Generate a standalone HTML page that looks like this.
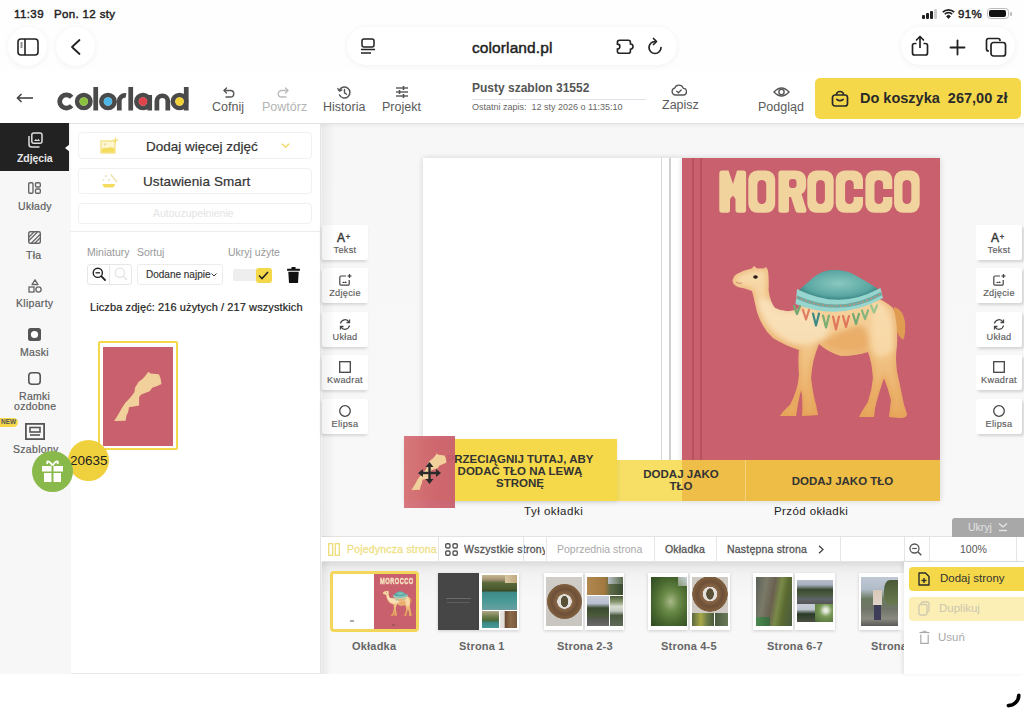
<!DOCTYPE html>
<html><head><meta charset="utf-8">
<style>
*{margin:0;padding:0;box-sizing:border-box}
html,body{width:1024px;height:711px;overflow:hidden;background:#fff;font-family:"Liberation Sans",sans-serif;color:#333}
.a{position:absolute}
.t{position:absolute;white-space:nowrap;line-height:1}
svg{position:absolute;overflow:visible}
</style></head><body>
<!-- browser chrome bg -->
<div class="a" style="left:0;top:0;width:1024px;height:123px;background:#fefefe"></div>
<div class="a" style="left:0;top:70px;width:1024px;height:53px;background:#fff"></div>
<div class="a" style="left:0;top:123px;width:1024px;height:2px;background:#e2e2e2"></div>

<!-- status bar -->
<div class="t" style="left:14px;top:9px;font-size:11.5px;color:#222;letter-spacing:0.4px;-webkit-text-stroke:0.45px #222">11:39</div>
<div class="t" style="left:54px;top:9px;font-size:11.5px;color:#222;letter-spacing:0.35px;-webkit-text-stroke:0.45px #222">Pon. 12 sty</div>
<svg style="left:922px;top:9px" width="16" height="10"><rect x="0" y="6" width="3" height="4" rx="1" fill="#222"/><rect x="4" y="4" width="3" height="6" rx="1" fill="#222"/><rect x="8" y="2" width="3" height="8" rx="1" fill="#222"/><rect x="12" y="0" width="3" height="10" rx="1" fill="#ccc"/></svg>
<svg style="left:942px;top:8px" width="13" height="11" viewBox="0 0 13 11"><path d="M0.8 4.2 A8 8 0 0 1 12.2 4.2" stroke="#222" stroke-width="1.7" fill="none"/><path d="M2.8 6.3 A5 5 0 0 1 10.2 6.3" stroke="#222" stroke-width="1.7" fill="none"/><path d="M4.6 8.3 A2.6 2.6 0 0 1 8.4 8.3 L6.5 10.4Z" fill="#222" stroke="#222" stroke-width="1"/></svg>
<div class="t" style="left:958px;top:9px;font-size:11.5px;color:#222;letter-spacing:0.3px;-webkit-text-stroke:0.45px #222">91%</div>
<div class="a" style="left:987px;top:8px;width:22px;height:11px;border:1px solid #bbb;border-radius:3.5px"></div>
<div class="a" style="left:989px;top:10px;width:17px;height:7px;background:#111;border-radius:2px"></div>
<div class="a" style="left:1010px;top:12px;width:1.5px;height:4px;background:#bbb;border-radius:1px"></div>

<!-- toolbar pills -->
<div class="a" style="left:8px;top:27px;width:39px;height:39px;border-radius:50%;background:#fff;box-shadow:0 1px 6px rgba(0,0,0,.06)"></div>
<svg style="left:17px;top:38px" width="22" height="18" viewBox="0 0 22 18"><rect x="1" y="1" width="20" height="16" rx="3" stroke="#222" stroke-width="1.6" fill="none"/><line x1="8" y1="1" x2="8" y2="17" stroke="#222" stroke-width="1.6"/><line x1="3.5" y1="5" x2="5.5" y2="5" stroke="#222" stroke-width="1"/><line x1="3.5" y1="7" x2="5.5" y2="7" stroke="#222" stroke-width="1"/><line x1="3.5" y1="9" x2="5.5" y2="9" stroke="#222" stroke-width="1"/></svg>
<div class="a" style="left:56px;top:27px;width:39px;height:39px;border-radius:50%;background:#fff;box-shadow:0 1px 6px rgba(0,0,0,.06)"></div>
<svg style="left:70px;top:39px" width="12" height="16" viewBox="0 0 12 16"><path d="M9.5 1 L2 8 L9.5 15" stroke="#222" stroke-width="1.8" fill="none" stroke-linecap="round" stroke-linejoin="round"/></svg>

<div class="a" style="left:347px;top:27px;width:330px;height:38px;border-radius:19px;background:#fff;box-shadow:0 1px 6px rgba(0,0,0,.06)"></div>
<svg style="left:360px;top:38px" width="16" height="17" viewBox="0 0 16 17"><rect x="2" y="1" width="12" height="8" rx="2" stroke="#222" stroke-width="1.5" fill="none"/><line x1="1" y1="11.5" x2="15" y2="11.5" stroke="#222" stroke-width="1.5"/><line x1="1" y1="15" x2="11" y2="15" stroke="#222" stroke-width="1.5"/></svg>
<div class="t" style="left:472px;top:40px;font-size:15.5px;color:#222;-webkit-text-stroke:0.45px #222;letter-spacing:0.1px">colorland.pl</div>
<svg style="left:615px;top:38px" width="21" height="17" viewBox="0 0 21 17"><path d="M4.4 2.3 H13.4 A2 2 0 0 1 15.4 4.3 V6 A2.6 2.6 0 0 1 15.4 11.2 V13.3 A2 2 0 0 1 13.4 15.3 H4.4 A2 2 0 0 1 2.4 13.3 V11.1 A2.5 2.5 0 0 0 2.4 6.1 V4.3 A2 2 0 0 1 4.4 2.3Z" stroke="#222" stroke-width="1.6" fill="none"/></svg>
<svg style="left:647px;top:38px" width="16" height="17" viewBox="0 0 16 17"><path d="M8 3.5 A6 6 0 1 0 14 9.5" stroke="#222" stroke-width="1.7" fill="none" stroke-linecap="round"/><path d="M6.5 0.5 L9.5 3.5 L6.5 6.5" stroke="#222" stroke-width="1.7" fill="none" stroke-linecap="round" stroke-linejoin="round"/></svg>

<div class="a" style="left:901px;top:27px;width:114px;height:38px;border-radius:19px;background:#fff;box-shadow:0 1px 6px rgba(0,0,0,.06)"></div>
<svg style="left:911px;top:35px" width="18" height="21" viewBox="0 0 18 21"><path d="M5.5 8.5 H3.5 A2 2 0 0 0 1.5 10.5 V18 A2 2 0 0 0 3.5 20 H14.5 A2 2 0 0 0 16.5 18 V10.5 A2 2 0 0 0 14.5 8.5 H12.5" stroke="#222" stroke-width="1.7" fill="none"/><line x1="9" y1="1.5" x2="9" y2="13" stroke="#222" stroke-width="1.7"/><path d="M5.5 5 L9 1.5 L12.5 5" stroke="#222" stroke-width="1.7" fill="none" stroke-linecap="round" stroke-linejoin="round"/></svg>
<svg style="left:950px;top:40px" width="15" height="15" viewBox="0 0 15 15"><line x1="7.5" y1="0.5" x2="7.5" y2="14.5" stroke="#222" stroke-width="1.8" stroke-linecap="round"/><line x1="0.5" y1="7.5" x2="14.5" y2="7.5" stroke="#222" stroke-width="1.8" stroke-linecap="round"/></svg>
<svg style="left:985px;top:37px" width="22" height="20" viewBox="0 0 22 20"><path d="M4 14 H3.5 A2 2 0 0 1 1.5 12 V3.5 A2 2 0 0 1 3.5 1.5 H13 A2 2 0 0 1 15 3.5 V4" stroke="#222" stroke-width="1.7" fill="none"/><rect x="6" y="5.5" width="14.5" height="13.5" rx="2.5" stroke="#222" stroke-width="1.7" fill="none"/></svg>

<!-- app header -->
<svg style="left:16px;top:93px" width="18" height="10" viewBox="0 0 18 10"><line x1="1.5" y1="5" x2="17" y2="5" stroke="#444" stroke-width="1.6"/><path d="M5.5 1 L1.5 5 L5.5 9" stroke="#444" stroke-width="1.6" fill="none"/></svg>
<!-- logo -->
<svg style="left:57px;top:86px" width="138" height="26" viewBox="0 0 134 26" preserveAspectRatio="none">
<g fill="none" stroke="#4a4a4a" stroke-width="4.6">
<path d="M14.2 11.2 A6.6 6.6 0 1 0 14.2 19.8"/>
<circle cx="26" cy="15.5" r="6.4"/>
<line x1="37.6" y1="1" x2="37.6" y2="24.5"/>
<circle cx="49.5" cy="15.5" r="6.4"/>
<path d="M60.5 24.5 V15 A5.5 5.5 0 0 1 67 9.5"/>
<line x1="71.6" y1="1" x2="71.6" y2="24.5"/>
<circle cx="83.5" cy="15.5" r="6.4"/>
<line x1="90" y1="9" x2="90" y2="24.5"/>
<path d="M97 24.5 V15 A5.3 5.3 0 0 1 107.6 15 V24.5"/>
<circle cx="119" cy="15.5" r="6.4"/>
<line x1="125.5" y1="1" x2="125.5" y2="24.5"/>
</g>
<circle cx="26" cy="15.5" r="4.2" fill="#8cc041"/>
<circle cx="49.5" cy="15.5" r="4.2" fill="#4cb6e4"/>
<circle cx="83.5" cy="15.5" r="4.2" fill="#e0434b"/>
<circle cx="119" cy="15.5" r="4.2" fill="#f3d238"/>
</svg>

<svg style="left:223px;top:87px" width="12" height="11" viewBox="0 0 12 11"><path d="M3.5 1 L1 3.5 L3.5 6" stroke="#555" stroke-width="1.4" fill="none" stroke-linejoin="round" stroke-linecap="round"/><path d="M1.3 3.5 H7.5 A3.2 3.2 0 0 1 7.5 10 H3" stroke="#555" stroke-width="1.4" fill="none" stroke-linecap="round"/></svg>
<div class="t" style="left:212px;top:101px;font-size:12.5px;color:#5a5a5a">Cofnij</div>
<svg style="left:277px;top:87px" width="12" height="11" viewBox="0 0 12 11"><path d="M8.5 1 L11 3.5 L8.5 6" stroke="#bbb" stroke-width="1.4" fill="none" stroke-linejoin="round" stroke-linecap="round"/><path d="M10.7 3.5 H4.5 A3.2 3.2 0 0 0 4.5 10 H9" stroke="#bbb" stroke-width="1.4" fill="none" stroke-linecap="round"/></svg>
<div class="t" style="left:262px;top:101px;font-size:12.5px;color:#b4b4b4">Powtórz</div>
<svg style="left:337px;top:86px" width="14" height="13" viewBox="0 0 14 13"><path d="M2.3 4.5 A5.5 5.5 0 1 1 2.5 9" stroke="#555" stroke-width="1.5" fill="none" stroke-linecap="round"/><path d="M0.8 2.5 L2.3 5 L4.8 4" stroke="#555" stroke-width="1.4" fill="none" stroke-linecap="round" stroke-linejoin="round"/><path d="M7.5 3.5 V6.8 L9.5 8.3" stroke="#555" stroke-width="1.4" fill="none" stroke-linecap="round"/></svg>
<div class="t" style="left:323px;top:101px;font-size:12.5px;color:#5a5a5a">Historia</div>
<svg style="left:395px;top:86px" width="14" height="12" viewBox="0 0 14 12"><g stroke="#555" stroke-width="1.4"><line x1="1" y1="2" x2="13" y2="2"/><line x1="1" y1="6" x2="13" y2="6"/><line x1="1" y1="10" x2="13" y2="10"/></g><g stroke="#555" stroke-width="1.6"><line x1="8.5" y1="0" x2="8.5" y2="4"/><line x1="4.5" y1="4" x2="4.5" y2="8"/><line x1="8.5" y1="8" x2="8.5" y2="12"/></g></svg>
<div class="t" style="left:382px;top:101px;font-size:12.5px;color:#5a5a5a">Projekt</div>

<div class="t" style="left:472px;top:82px;font-size:12px;font-weight:bold;color:#555">Pusty szablon 31552</div>
<div class="a" style="left:472px;top:99px;width:174px;height:1px;background:#dde3e8"></div>
<div class="t" style="left:472px;top:103px;font-size:9px;color:#666">Ostatni zapis:&nbsp; 12 sty 2026 o 11:35:10</div>

<svg style="left:671px;top:84px" width="16" height="12" viewBox="0 0 16 12"><path d="M4 11 A3.5 3.5 0 0 1 3.6 4.2 A4.6 4.6 0 0 1 12.3 4.4 A3.3 3.3 0 0 1 12 11 Z" stroke="#555" stroke-width="1.3" fill="none" stroke-linejoin="round"/><path d="M5.8 7.3 L7.4 8.8 L10.2 6" stroke="#555" stroke-width="1.3" fill="none" stroke-linecap="round"/></svg>
<div class="t" style="left:662px;top:99px;font-size:12.5px;color:#5a5a5a">Zapisz</div>

<svg style="left:773px;top:86px" width="17" height="12" viewBox="0 0 17 12"><path d="M1 6 Q8.5 -2 16 6 Q8.5 14 1 6Z" stroke="#555" stroke-width="1.4" fill="none"/><circle cx="8.5" cy="6" r="2.6" stroke="#555" stroke-width="1.4" fill="none"/></svg>
<div class="t" style="left:758px;top:101px;font-size:12.5px;color:#5a5a5a">Podgląd</div>

<div class="a" style="left:815px;top:78px;width:206px;height:41px;border-radius:5px;background:#f5d84a"></div>
<svg style="left:831px;top:91px" width="18" height="16" viewBox="0 0 18 16"><rect x="1.5" y="4" width="15" height="11" rx="2.5" stroke="#2a2a2a" stroke-width="1.7" fill="none"/><path d="M5.5 4 V3.5 A3.5 3 0 0 1 12.5 3.5 V4" stroke="#2a2a2a" stroke-width="1.7" fill="none"/><path d="M5.8 8.3 Q9 11 12.2 8.3" stroke="#2a2a2a" stroke-width="1.6" fill="none" stroke-linecap="round"/></svg>
<div class="t" style="left:860px;top:91px;font-size:14.5px;font-weight:bold;color:#2a2a2a">Do koszyka&nbsp; 267,00 zł</div>

<!-- left sidebar -->
<div class="a" style="left:0;top:124px;width:71px;height:550px;background:#f7f7f7"></div>
<div class="a" style="left:0;top:123px;width:69px;height:48px;background:#222"></div>

<!-- sidebar items -->
<div class="a" style="left:65px;top:144px;width:0;height:0;border-top:4.5px solid transparent;border-bottom:4.5px solid transparent;border-right:5px solid #fff"></div>
<svg style="left:27px;top:132px" width="16" height="16" viewBox="0 0 16 16"><path d="M2 4 V12.5 A2.5 2.5 0 0 0 4.5 15 H12.5" stroke="#ddd" stroke-width="1.5" fill="none"/><rect x="4.8" y="1" width="10.2" height="10.2" rx="2" stroke="#ddd" stroke-width="1.5" fill="none"/><path d="M7 9 L8.8 7 L10.2 8.2 L11.5 6.8 L13 9Z" fill="#ddd"/></svg>
<div class="t" style="left:17px;top:153px;font-size:10.5px;font-weight:bold;color:#e6e6e6;letter-spacing:-0.1px">Zdjęcia</div>

<svg style="left:28px;top:182px" width="13" height="12" viewBox="0 0 13 12"><rect x="0.7" y="0.7" width="4.3" height="10.6" rx="1.2" stroke="#666" stroke-width="1.4" fill="none"/><rect x="7.5" y="0.7" width="4.8" height="4.3" rx="1.2" stroke="#666" stroke-width="1.4" fill="none"/><rect x="7.5" y="7" width="4.8" height="4.3" rx="1.2" stroke="#666" stroke-width="1.4" fill="none"/></svg>
<div class="t" style="left:18px;top:201px;font-size:10.5px;color:#5e5e5e;letter-spacing:0.3px;-webkit-text-stroke:0.2px #5e5e5e">Układy</div>

<svg style="left:28px;top:231px" width="13" height="13" viewBox="0 0 13 13"><rect x="0.7" y="0.7" width="11.6" height="11.6" rx="1.5" stroke="#666" stroke-width="1.4" fill="none"/><g stroke="#666" stroke-width="1.3"><line x1="1" y1="6" x2="6" y2="1"/><line x1="1" y1="9.5" x2="9.5" y2="1"/><line x1="3.5" y1="12" x2="12" y2="3.5"/><line x1="7" y1="12" x2="12" y2="7"/></g></svg>
<div class="t" style="left:26px;top:250px;font-size:10.5px;color:#5e5e5e;letter-spacing:0.3px;-webkit-text-stroke:0.2px #5e5e5e">Tła</div>

<svg style="left:28px;top:279px" width="14" height="14" viewBox="0 0 14 14"><path d="M7 0.8 L10 5.5 H4Z" stroke="#666" stroke-width="1.3" fill="none" stroke-linejoin="round"/><rect x="1" y="8" width="5" height="5" stroke="#666" stroke-width="1.3" fill="none"/><circle cx="10.5" cy="10.5" r="2.6" stroke="#666" stroke-width="1.3" fill="none"/></svg>
<div class="t" style="left:16px;top:298px;font-size:10.5px;color:#5e5e5e;letter-spacing:0.3px;-webkit-text-stroke:0.2px #5e5e5e">Kliparty</div>

<svg style="left:28px;top:328px" width="13" height="13" viewBox="0 0 13 13"><rect x="0" y="0" width="13" height="13" rx="2.5" fill="#555"/><circle cx="6.5" cy="6.5" r="3.6" fill="#fff"/></svg>
<div class="t" style="left:20px;top:347px;font-size:10.5px;color:#5e5e5e;letter-spacing:0.3px;-webkit-text-stroke:0.2px #5e5e5e">Maski</div>

<svg style="left:28px;top:372px" width="13" height="13" viewBox="0 0 13 13"><rect x="0.8" y="0.8" width="11.4" height="11.4" rx="3" stroke="#555" stroke-width="1.6" fill="none"/></svg>
<div class="t" style="left:19px;top:391px;font-size:10.5px;color:#5e5e5e;letter-spacing:0.3px;-webkit-text-stroke:0.2px #5e5e5e">Ramki</div>
<div class="t" style="left:14px;top:401px;font-size:10.5px;color:#5e5e5e;letter-spacing:0.3px;-webkit-text-stroke:0.2px #5e5e5e">ozdobne</div>

<div class="a" style="left:-6px;top:418px;width:24px;height:9px;border-radius:5px;background:#f5d84a"></div>
<div class="t" style="left:1px;top:419px;font-size:6.5px;font-weight:bold;color:#555">NEW</div>
<svg style="left:25px;top:423px" width="20" height="17" viewBox="0 0 20 17"><rect x="0.9" y="0.9" width="18.2" height="15.2" stroke="#555" stroke-width="1.8" fill="none"/><rect x="5" y="4.5" width="10" height="4.5" stroke="#555" stroke-width="1.6" fill="none"/><line x1="5" y1="12" x2="15" y2="12" stroke="#555" stroke-width="1.6"/></svg>
<div class="t" style="left:13px;top:444px;font-size:10.5px;color:#5e5e5e;letter-spacing:0.3px;-webkit-text-stroke:0.2px #5e5e5e">Szablony</div>

<!-- left panel -->
<div class="a" style="left:71px;top:124px;width:250px;height:550px;background:#fff"></div>
<div class="a" style="left:320px;top:124px;width:1px;height:550px;background:#e4e4e4"></div>

<!-- panel content -->
<div class="a" style="left:78px;top:132px;width:234px;height:27px;border:1px solid #f1f1f1;border-radius:4px;background:#fff"></div>
<svg style="left:100px;top:137px" width="19" height="17" viewBox="0 0 19 17"><rect x="1" y="4" width="14" height="12" fill="#fdf6d0" stroke="#f3df78" stroke-width="1.2"/><path d="M1.5 15.5 V12 Q5 10 8 11 Q11 9.5 14.5 11.5 V15.5Z" fill="#f3dc5e"/><circle cx="5" cy="7.3" r="1.1" fill="#e8d9a0"/><line x1="15.5" y1="0.5" x2="15.5" y2="6" stroke="#f3df78" stroke-width="1.3"/><line x1="12.8" y1="3.2" x2="18.3" y2="3.2" stroke="#f3df78" stroke-width="1.3"/></svg>
<div class="t" style="left:146px;top:140px;font-size:13.5px;color:#333;letter-spacing:0px;-webkit-text-stroke:0.2px #333">Dodaj więcej zdjęć</div>
<svg style="left:281px;top:143px" width="9" height="5" viewBox="0 0 9 5"><path d="M0.8 0.8 L4.5 4.2 L8.2 0.8" stroke="#f0d65a" stroke-width="1.3" fill="none"/></svg>

<div class="a" style="left:78px;top:168px;width:234px;height:26px;border:1px solid #f1f1f1;border-radius:4px;background:#fff"></div>
<svg style="left:100px;top:172px" width="19" height="17" viewBox="0 0 19 17"><path d="M2.5 12 H15 Q14.5 15.5 12 15.5 H5.5 Q3 15.5 2.5 12Z" fill="#f3dc5e"/><circle cx="6" cy="4" r="1" fill="#e4dcb0"/><circle cx="3.5" cy="8" r="0.8" fill="#e4dcb0"/><circle cx="9" cy="8" r="0.9" fill="#e4dcb0"/><line x1="11" y1="3" x2="17" y2="10" stroke="#eee0a0" stroke-width="1.2"/><path d="M11 2 L12 3.5" stroke="#f0e39a" stroke-width="1"/></svg>
<div class="t" style="left:143px;top:175px;font-size:13.5px;color:#333;letter-spacing:0.1px;-webkit-text-stroke:0.2px #333">Ustawienia Smart</div>

<div class="a" style="left:78px;top:203px;width:234px;height:21px;border:1px solid #f0f0f0;border-radius:4px;background:#fff"></div>
<div class="t" style="left:153px;top:208px;font-size:10.5px;color:#e4e4e4">Autouzupełnienie</div>
<div class="a" style="left:70px;top:231px;width:251px;height:1px;background:#ececec"></div>

<div class="t" style="left:87px;top:247px;font-size:10.5px;color:#999">Miniatury</div>
<div class="t" style="left:137px;top:247px;font-size:10.5px;color:#999">Sortuj</div>
<div class="t" style="left:228px;top:247px;font-size:10.5px;color:#999">Ukryj użyte</div>

<div class="a" style="left:87px;top:264px;width:45px;height:21px;border:1px solid #e6e6e6;border-radius:3px;background:#fff"></div>
<div class="a" style="left:109px;top:264px;width:1px;height:21px;background:#e6e6e6"></div>
<svg style="left:92px;top:267px" width="14" height="14" viewBox="0 0 14 14"><circle cx="5.8" cy="5.8" r="4.6" stroke="#222" stroke-width="1.4" fill="none"/><line x1="3.5" y1="5.8" x2="8.1" y2="5.8" stroke="#222" stroke-width="1.3"/><line x1="9.2" y1="9.2" x2="13" y2="13" stroke="#222" stroke-width="1.8" stroke-linecap="round"/></svg>
<svg style="left:114px;top:267px" width="14" height="14" viewBox="0 0 14 14"><circle cx="5.8" cy="5.8" r="4.6" stroke="#e4e4e4" stroke-width="1.3" fill="none"/><line x1="9.2" y1="9.2" x2="13" y2="13" stroke="#e4e4e4" stroke-width="1.6"/></svg>

<div class="a" style="left:137px;top:264px;width:86px;height:21px;border:1px solid #ececec;border-radius:3px;background:#fff"></div>
<div class="t" style="left:146px;top:270px;font-size:10px;color:#333;-webkit-text-stroke:0.15px #333">Dodane najpie</div>
<svg style="left:211px;top:273px" width="6" height="4" viewBox="0 0 6 4"><path d="M0.5 0.5 L3 3 L5.5 0.5" stroke="#333" stroke-width="1" fill="none"/></svg>

<div class="a" style="left:233px;top:269px;width:26px;height:12px;border-radius:2px;background:#eeeeef"></div>
<div class="a" style="left:256px;top:268px;width:16px;height:15px;border-radius:3px;background:#f5d84a"></div>
<svg style="left:258px;top:271px" width="11" height="9" viewBox="0 0 11 9"><path d="M1 4.5 L4 7.5 L10 1" stroke="#222" stroke-width="1.6" fill="none"/></svg>
<svg style="left:287px;top:267px" width="13" height="16" viewBox="0 0 13 16"><rect x="0" y="1.8" width="13" height="2" rx="0.5" fill="#111"/><rect x="4.5" y="0" width="4" height="2" fill="#111"/><path d="M1.3 4.8 H11.7 L11 16 H2Z" fill="#111"/></svg>

<div class="t" style="left:90px;top:302px;font-size:11px;color:#222;letter-spacing:0.1px;-webkit-text-stroke:0.2px #222">Liczba zdjęć: 216 użytych / 217 wszystkich</div>

<!-- selected photo thumb -->
<div class="a" style="left:98px;top:341px;width:80px;height:109px;border:2.5px solid #f5d84a;border-radius:2px;background:#fff"></div>
<div class="a" style="left:103px;top:347px;width:70px;height:99px;background:#c9606e"></div>
<svg style="left:103px;top:347px" width="70" height="99" viewBox="0 0 70 99"><path d="M45.4 24.75 L47.5 26.4 L55.9 27.3 L57.6 31.5 L58.5 37 L54.3 39.1 L49.2 40.8 L46.7 44.2 L38.2 47.5 L36.1 50.1 L36.1 58.5 L30.6 59.4 L26 60.2 L25.1 65.3 L23.5 68.6 L22.6 73.7 L11.2 74.1 L13.5 70.3 L16.5 65.3 L19.5 60 L22.5 55.5 L26 52 L29 48.5 L31.5 45 L32 40.8 L35.5 35 L40 31.5 L43 28Z" fill="#f1d09b"/></svg>

<!-- gift badges -->
<div class="a" style="left:68px;top:440px;width:41px;height:41px;border-radius:50%;background:#efd03d"></div>
<div class="t" style="left:70px;top:454px;font-size:13.5px;color:#222">20635</div>
<div class="a" style="left:32px;top:451px;width:41px;height:41px;border-radius:50%;background:#8ab94b"></div>
<svg style="left:41px;top:457px" width="23" height="27" viewBox="0 0 23 27"><g fill="#fff"><rect x="1" y="9" width="9.5" height="5.5"/><rect x="12.5" y="9" width="9.5" height="5.5"/><rect x="3" y="16" width="7.5" height="9"/><rect x="12.5" y="16" width="7.5" height="9"/></g><path d="M11.5 8.5 C8 3 5 3.5 6.5 7 M11.5 8.5 C15 3 18 3.5 16.5 7" stroke="#fff" stroke-width="1.8" fill="none"/></svg>

<div class="a" style="left:71px;top:673px;width:250px;height:1px;background:#e6e6e6"></div>
<!-- canvas -->
<div class="a" style="left:322px;top:124px;width:702px;height:413px;background:linear-gradient(#ececec,#f7f7f7 4px,#f8f8f8)"></div>

<!-- tools -->
<div class="a" style="left:322px;top:224.5px;width:46px;height:35px;border-radius:2px;background:#fff;box-shadow:-1px 2px 3px rgba(0,0,0,.13)"></div>
<div class="t" style="left:337px;top:232.0px;font-size:12px;color:#333;-webkit-text-stroke:0.4px #333">A</div><div class="t" style="left:345.5px;top:233.0px;font-size:8.5px;font-weight:bold;color:#444">+</div>
<div class="t" style="left:315px;width:60px;text-align:center;top:245.5px;font-size:9.2px;color:#5c5c5c;letter-spacing:0.3px;-webkit-text-stroke:0.15px #5c5c5c">Tekst</div>
<div class="a" style="left:322px;top:268.0px;width:46px;height:35px;border-radius:2px;background:#fff;box-shadow:-1px 2px 3px rgba(0,0,0,.13)"></div>
<svg style="left:339px;top:274.0px" width="13" height="12" viewBox="0 0 13 12"><path d="M7 2 H2 A1.2 1.2 0 0 0 0.8 3.2 V10 A1.2 1.2 0 0 0 2 11.2 H9 A1.2 1.2 0 0 0 10.2 10 V6" stroke="#444" stroke-width="1.2" fill="none"/><path d="M3 9 L4.5 7.5 L5.5 8.5 L6.5 7.3 L8 9Z" fill="#444"/><line x1="10.5" y1="0" x2="10.5" y2="4" stroke="#444" stroke-width="1.2"/><line x1="8.5" y1="2" x2="12.5" y2="2" stroke="#444" stroke-width="1.2"/></svg>
<div class="t" style="left:315px;width:60px;text-align:center;top:289.0px;font-size:9.2px;color:#5c5c5c;letter-spacing:0.3px;-webkit-text-stroke:0.15px #5c5c5c">Zdjęcie</div>
<div class="a" style="left:322px;top:311.5px;width:46px;height:35px;border-radius:2px;background:#fff;box-shadow:-1px 2px 3px rgba(0,0,0,.13)"></div>
<svg style="left:339px;top:318.5px" width="12" height="11" viewBox="0 0 12 11"><path d="M1.5 4.5 A4.6 4.6 0 0 1 10 3" stroke="#444" stroke-width="1.3" fill="none"/><path d="M10.5 6.5 A4.6 4.6 0 0 1 2 8" stroke="#444" stroke-width="1.3" fill="none"/><path d="M10.5 0.5 V3.5 H7.5" stroke="#444" stroke-width="1.3" fill="none"/><path d="M1.5 10.5 V7.5 H4.5" stroke="#444" stroke-width="1.3" fill="none"/></svg>
<div class="t" style="left:315px;width:60px;text-align:center;top:332.5px;font-size:9.2px;color:#5c5c5c;letter-spacing:0.3px;-webkit-text-stroke:0.15px #5c5c5c">Układ</div>
<div class="a" style="left:322px;top:355.0px;width:46px;height:35px;border-radius:2px;background:#fff;box-shadow:-1px 2px 3px rgba(0,0,0,.13)"></div>
<svg style="left:339px;top:361.0px" width="12" height="12" viewBox="0 0 12 12"><rect x="0.7" y="0.7" width="10.6" height="10.6" stroke="#444" stroke-width="1.3" fill="none"/></svg>
<div class="t" style="left:315px;width:60px;text-align:center;top:376.0px;font-size:9.2px;color:#5c5c5c;letter-spacing:0.3px;-webkit-text-stroke:0.15px #5c5c5c">Kwadrat</div>
<div class="a" style="left:322px;top:398.5px;width:46px;height:35px;border-radius:2px;background:#fff;box-shadow:-1px 2px 3px rgba(0,0,0,.13)"></div>
<svg style="left:339px;top:404.5px" width="12" height="12" viewBox="0 0 12 12"><circle cx="6" cy="6" r="5.3" stroke="#444" stroke-width="1.3" fill="none"/></svg>
<div class="t" style="left:315px;width:60px;text-align:center;top:419.5px;font-size:9.2px;color:#5c5c5c;letter-spacing:0.3px;-webkit-text-stroke:0.15px #5c5c5c">Elipsa</div>
<div class="a" style="left:976px;top:224.5px;width:46px;height:35px;border-radius:2px;background:#fff;box-shadow:2px 2px 3px rgba(0,0,0,.15)"></div>
<div class="t" style="left:991px;top:232.0px;font-size:12px;color:#333;-webkit-text-stroke:0.4px #333">A</div><div class="t" style="left:999.5px;top:233.0px;font-size:8.5px;font-weight:bold;color:#444">+</div>
<div class="t" style="left:969px;width:60px;text-align:center;top:245.5px;font-size:9.2px;color:#5c5c5c;letter-spacing:0.3px;-webkit-text-stroke:0.15px #5c5c5c">Tekst</div>
<div class="a" style="left:976px;top:268.0px;width:46px;height:35px;border-radius:2px;background:#fff;box-shadow:2px 2px 3px rgba(0,0,0,.15)"></div>
<svg style="left:993px;top:274.0px" width="13" height="12" viewBox="0 0 13 12"><path d="M7 2 H2 A1.2 1.2 0 0 0 0.8 3.2 V10 A1.2 1.2 0 0 0 2 11.2 H9 A1.2 1.2 0 0 0 10.2 10 V6" stroke="#444" stroke-width="1.2" fill="none"/><path d="M3 9 L4.5 7.5 L5.5 8.5 L6.5 7.3 L8 9Z" fill="#444"/><line x1="10.5" y1="0" x2="10.5" y2="4" stroke="#444" stroke-width="1.2"/><line x1="8.5" y1="2" x2="12.5" y2="2" stroke="#444" stroke-width="1.2"/></svg>
<div class="t" style="left:969px;width:60px;text-align:center;top:289.0px;font-size:9.2px;color:#5c5c5c;letter-spacing:0.3px;-webkit-text-stroke:0.15px #5c5c5c">Zdjęcie</div>
<div class="a" style="left:976px;top:311.5px;width:46px;height:35px;border-radius:2px;background:#fff;box-shadow:2px 2px 3px rgba(0,0,0,.15)"></div>
<svg style="left:993px;top:318.5px" width="12" height="11" viewBox="0 0 12 11"><path d="M1.5 4.5 A4.6 4.6 0 0 1 10 3" stroke="#444" stroke-width="1.3" fill="none"/><path d="M10.5 6.5 A4.6 4.6 0 0 1 2 8" stroke="#444" stroke-width="1.3" fill="none"/><path d="M10.5 0.5 V3.5 H7.5" stroke="#444" stroke-width="1.3" fill="none"/><path d="M1.5 10.5 V7.5 H4.5" stroke="#444" stroke-width="1.3" fill="none"/></svg>
<div class="t" style="left:969px;width:60px;text-align:center;top:332.5px;font-size:9.2px;color:#5c5c5c;letter-spacing:0.3px;-webkit-text-stroke:0.15px #5c5c5c">Układ</div>
<div class="a" style="left:976px;top:355.0px;width:46px;height:35px;border-radius:2px;background:#fff;box-shadow:2px 2px 3px rgba(0,0,0,.15)"></div>
<svg style="left:993px;top:361.0px" width="12" height="12" viewBox="0 0 12 12"><rect x="0.7" y="0.7" width="10.6" height="10.6" stroke="#444" stroke-width="1.3" fill="none"/></svg>
<div class="t" style="left:969px;width:60px;text-align:center;top:376.0px;font-size:9.2px;color:#5c5c5c;letter-spacing:0.3px;-webkit-text-stroke:0.15px #5c5c5c">Kwadrat</div>
<div class="a" style="left:976px;top:398.5px;width:46px;height:35px;border-radius:2px;background:#fff;box-shadow:2px 2px 3px rgba(0,0,0,.15)"></div>
<svg style="left:993px;top:404.5px" width="12" height="12" viewBox="0 0 12 12"><circle cx="6" cy="6" r="5.3" stroke="#444" stroke-width="1.3" fill="none"/></svg>
<div class="t" style="left:969px;width:60px;text-align:center;top:419.5px;font-size:9.2px;color:#5c5c5c;letter-spacing:0.3px;-webkit-text-stroke:0.15px #5c5c5c">Elipsa</div>

<!-- bottom bar -->
<div class="a" style="left:322px;top:536px;width:702px;height:26px;background:#fff;border-top:1px solid #e3e3e3;border-bottom:1px solid #e3e3e3"></div>

<!-- bar contents -->
<div class="a" style="left:952px;top:518px;width:72px;height:19px;border-radius:3px 0 0 0;background:#a8a8a8"></div>
<div class="t" style="left:968px;top:522px;font-size:10.5px;color:#e2e2e2">Ukryj</div>
<svg style="left:998px;top:522px" width="10" height="10" viewBox="0 0 10 10"><path d="M1 1.5 L5 5 L9 1.5" stroke="#e8e8e8" stroke-width="1.3" fill="none"/><line x1="1" y1="8.5" x2="9" y2="8.5" stroke="#e8e8e8" stroke-width="1.3"/></svg>

<svg style="left:328px;top:543px" width="12" height="13" viewBox="0 0 12 13"><rect x="0.7" y="0.7" width="4" height="11.6" stroke="#efdc78" stroke-width="1.3" fill="none"/><rect x="7.3" y="0.7" width="4" height="11.6" stroke="#efdc78" stroke-width="1.3" fill="none"/></svg>
<div class="t" style="left:347px;top:544px;font-size:10.5px;color:#efdf86;-webkit-text-stroke:0.3px #efdf86;letter-spacing:0.2px">Pojedyncza strona</div>
<div class="a" style="left:438px;top:537px;width:1px;height:25px;background:#e6e6e6"></div>
<svg style="left:445px;top:543px" width="13" height="13" viewBox="0 0 13 13"><g stroke="#555" stroke-width="1.4" fill="none"><rect x="0.7" y="0.7" width="4.3" height="4.3" rx="1.3"/><rect x="8" y="0.7" width="4.3" height="4.3" rx="1.3"/><rect x="0.7" y="8" width="4.3" height="4.3" rx="1.3"/><rect x="8" y="8" width="4.3" height="4.3" rx="1.3"/></g></svg>
<div class="t" style="left:464px;top:544px;font-size:10.5px;color:#555;-webkit-text-stroke:0.3px #555;letter-spacing:0.3px;width:81px;overflow:hidden">Wszystkie strony</div>
<div class="a" style="left:523px;top:537px;width:1px;height:25px;background:#e6e6e6"></div>
<div class="a" style="left:546px;top:537px;width:1px;height:25px;background:#e6e6e6"></div>
<div class="t" style="left:557px;top:544px;font-size:10.5px;color:#a8a8a8">Poprzednia strona</div>
<div class="a" style="left:654px;top:537px;width:1px;height:25px;background:#e6e6e6"></div>
<div class="t" style="left:665px;top:544px;font-size:10.5px;color:#555;-webkit-text-stroke:0.3px #555;letter-spacing:0.2px">Okładka</div>
<div class="a" style="left:716px;top:537px;width:1px;height:25px;background:#e6e6e6"></div>
<div class="t" style="left:727px;top:544px;font-size:10.5px;color:#555;-webkit-text-stroke:0.3px #555;letter-spacing:0.2px">Następna strona</div>
<svg style="left:818px;top:545px" width="6" height="9" viewBox="0 0 6 9"><path d="M1 0.8 L5 4.5 L1 8.2" stroke="#444" stroke-width="1.3" fill="none"/></svg>
<div class="a" style="left:840px;top:537px;width:1px;height:25px;background:#e6e6e6"></div>
<div class="a" style="left:904px;top:537px;width:1px;height:25px;background:#e6e6e6"></div>
<svg style="left:909px;top:543px" width="13" height="13" viewBox="0 0 13 13"><circle cx="5.5" cy="5.5" r="4.5" stroke="#555" stroke-width="1.3" fill="none"/><line x1="3.2" y1="5.5" x2="7.8" y2="5.5" stroke="#555" stroke-width="1.2"/><line x1="8.8" y1="8.8" x2="12.3" y2="12.3" stroke="#555" stroke-width="1.5"/></svg>
<div class="a" style="left:929px;top:537px;width:1px;height:25px;background:#e6e6e6"></div>
<div class="t" style="left:960px;top:544px;font-size:10.5px;color:#555">100%</div>
<div class="a" style="left:1016px;top:537px;width:1px;height:25px;background:#e6e6e6"></div>

<!-- thumbs strip -->
<div class="a" style="left:322px;top:562px;width:702px;height:112px;background:linear-gradient(#dcdcdc,#ececec 6px,#f3f3f3 14px,#f8f8f8 40px)"></div>

<!-- thumbnails -->
<div class="a" style="left:330px;top:571px;width:89px;height:61px;border:3px solid #f3d65a;border-radius:4px;background:#fff"></div>
<div class="a" style="left:374px;top:574px;width:42px;height:55px;background:#c9606e"></div>
<div class="t" style="left:380px;top:575.5px;font-size:9.5px;font-weight:bold;color:#f6e2c0;transform:scaleX(0.6);transform-origin:0 0;-webkit-text-stroke:0.5px #f6e2c0;letter-spacing:0.8px">MOROCCO</div>
<svg style="left:382px;top:590px" width="30" height="27" viewBox="728 262 180 162"><use href="#camelg"/></svg>
<div class="a" style="left:350px;top:620px;width:4px;height:2px;background:#aaa"></div>
<div class="a" style="left:392px;top:624px;width:3px;height:2px;background:#a55"></div>
<div class="t" style="left:352px;top:641px;font-size:11px;font-weight:bold;color:#666;letter-spacing:0.2px">Okładka</div>

<div class="a" style="left:438px;top:573px;width:41px;height:57px;background:#464646;box-shadow:0 1px 3px rgba(0,0,0,.18)"></div>
<div class="a" style="left:446px;top:598px;width:25px;height:1px;background:#6a6a6a;"></div>
<div class="a" style="left:447px;top:602px;width:23px;height:1px;background:#5e5e5e;"></div>
<div class="a" style="left:479px;top:573px;width:40px;height:57px;background:#fff;box-shadow:0 1px 3px rgba(0,0,0,.18)"></div>
<div class="a" style="left:482px;top:575px;width:35px;height:35px;background:linear-gradient(180deg,#c8b890 0%,#a09070 14%,#5a6a3a 22%,#4a5a30 40%,#3a4a28 45%,#3e8a88 50%,#4a9a98 75%,#6aa0a0 100%);"></div>
<div class="a" style="left:505px;top:575px;width:12px;height:8px;background:linear-gradient(90deg,#d8c8a0,#c0a880);"></div>
<div class="a" style="left:482px;top:611px;width:17px;height:17px;background:linear-gradient(180deg,#b0a888,#6a7a48 35%,#4a6a3a 55%,#3a8a88 70%,#4a9a98);"></div>
<div class="a" style="left:500px;top:611px;width:17px;height:17px;background:linear-gradient(90deg,#e8e4e0 0%,#e0dcd8 25%,#6a4a30 30%,#8a6a48 60%,#7a5a40);"></div>
<div class="t" style="left:459px;top:641px;font-size:11px;font-weight:bold;color:#666;letter-spacing:0.2px">Strona 1</div>
<div class="a" style="left:544px;top:573px;width:39px;height:57px;background:#fff;box-shadow:0 1px 3px rgba(0,0,0,.18)"></div>
<div class="a" style="left:546px;top:577px;width:36px;height:49px;background:linear-gradient(180deg,#d0ccc8,#c8c4c0);"></div>
<div class="a" style="left:547px;top:584px;width:35px;height:35px;border-radius:50%;background:radial-gradient(ellipse 4px 6px,#5a5038 0,#5a5038 3.5px,transparent 4px),radial-gradient(circle,#e4e0dc 0,#e4e0dc 7px,#8a6848 7.5px,#6e5038 12.5px,#80603f 17.5px,transparent 18px)"></div>
<div class="a" style="left:585px;top:573px;width:39px;height:57px;background:#fff;box-shadow:0 1px 3px rgba(0,0,0,.18)"></div>
<div class="a" style="left:587px;top:577px;width:36px;height:18px;background:linear-gradient(90deg,#b08850 0%,#a07840 50%,#5a6a48 65%,#3a4a30 100%);"></div>
<div class="a" style="left:608px;top:577px;width:15px;height:7px;background:linear-gradient(90deg,#b8c0c8,#5a6a4a);"></div>
<div class="a" style="left:587px;top:596px;width:22px;height:30px;background:linear-gradient(180deg,#c8ccd8 0%,#b8c0d0 25%,#3a4a30 40%,#4a5a38 65%,#5a5a58 80%,#6a6a68 100%);"></div>
<div class="a" style="left:610px;top:596px;width:13px;height:30px;background:linear-gradient(180deg,#4a5a38 0%,#8a9a70 20%,#d8dcd0 35%,#c0c8c0 50%,#4a5a40 65%,#606a58 100%);"></div>
<div class="t" style="left:557px;top:641px;font-size:11px;font-weight:bold;color:#666;letter-spacing:0.2px">Strona 2-3</div>
<div class="a" style="left:648px;top:573px;width:40px;height:57px;background:#fff;box-shadow:0 1px 3px rgba(0,0,0,.18)"></div>
<div class="a" style="left:651px;top:577px;width:36px;height:49px;background:radial-gradient(ellipse at 55% 50%,#a8b888 0%,#6a8a48 30%,#4a6a30 60%,#2e4a20 100%);"></div>
<div class="a" style="left:678px;top:577px;width:9px;height:9px;background:linear-gradient(225deg,#c8d0d8,#8a9a78);"></div>
<div class="a" style="left:690px;top:573px;width:40px;height:57px;background:#fff;box-shadow:0 1px 3px rgba(0,0,0,.18)"></div>
<div class="a" style="left:692px;top:577px;width:36px;height:36px;background:#cfcac4;"></div>
<div class="a" style="left:692px;top:577px;width:36px;height:36px;overflow:hidden"><div class="a" style="left:0px;top:-1px;width:36px;height:36px;border-radius:50%;background:radial-gradient(ellipse 4px 6px,#5a5038 0,#5a5038 3.5px,transparent 4px),radial-gradient(circle,#e4e0dc 0,#e4e0dc 7px,#8a6848 7.5px,#6e5038 12.5px,#80603f 17.5px,transparent 18px)"></div></div>
<div class="a" style="left:692px;top:613px;width:22px;height:13px;background:linear-gradient(90deg,#5a6a40,#a8a848 40%,#6a7a48 70%,#4a5a3a);"></div>
<div class="a" style="left:715px;top:613px;width:13px;height:13px;background:linear-gradient(90deg,#4a5a40,#6a7a58);"></div>
<div class="t" style="left:661px;top:641px;font-size:11px;font-weight:bold;color:#666;letter-spacing:0.2px">Strona 4-5</div>
<div class="a" style="left:753px;top:573px;width:40px;height:57px;background:#fff;box-shadow:0 1px 3px rgba(0,0,0,.18)"></div>
<div class="a" style="left:756px;top:577px;width:36px;height:49px;background:linear-gradient(100deg,#5a6058 0%,#7a7a68 25%,#6a6050 45%,#7a8a48 60%,#5a6a30 75%,#4a5a40 100%);"></div>
<div class="a" style="left:756px;top:617px;width:14px;height:9px;background:linear-gradient(90deg,#4a8a50,#3a6a40);"></div>
<div class="a" style="left:795px;top:573px;width:40px;height:57px;background:#fff;box-shadow:0 1px 3px rgba(0,0,0,.18)"></div>
<div class="a" style="left:797px;top:580px;width:36px;height:24px;background:linear-gradient(180deg,#b8bcc8 0%,#a8b0c0 20%,#3a4a30 40%,#4a5a40 60%,#606468 80%,#555 100%);"></div>
<div class="a" style="left:797px;top:604px;width:18px;height:18px;background:linear-gradient(180deg,#c8ccd8 0%,#c0c8d0 30%,#2a3a28 55%,#4a5040 100%);"></div>
<div class="a" style="left:815px;top:604px;width:18px;height:18px;background:radial-gradient(circle at 60% 35%,#f0f0e8 0,#e0e8d8 12%,#7a9a58 40%,#4a6a38 100%);"></div>
<div class="t" style="left:767px;top:641px;font-size:11px;font-weight:bold;color:#666;letter-spacing:0.2px">Strona 6-7</div>
<div class="a" style="left:859px;top:573px;width:41px;height:57px;background:#fff;box-shadow:0 1px 3px rgba(0,0,0,.18)"></div>
<div class="a" style="left:861px;top:577px;width:37px;height:49px;background:linear-gradient(180deg,#c0c8d4 0%,#b0bcc8 25%,#6a7a60 45%,#707468 65%,#8a8a80 85%,#5a5a58 100%);"></div>
<div class="a" style="left:884px;top:580px;width:14px;height:25px;background:linear-gradient(180deg,#4a5a38,#6a7a50);border-radius:40% 0 0 40%"></div>
<div class="a" style="left:873px;top:590px;width:9px;height:15px;background:linear-gradient(180deg,#d8c8b8,#e0d4c8);"></div>
<div class="a" style="left:874px;top:605px;width:7px;height:15px;background:#3e3e5a;"></div>
<div class="a" style="left:900px;top:573px;width:4px;height:57px;background:#fff;"></div>
<div class="t" style="left:871px;top:641px;font-size:11px;font-weight:bold;color:#666;letter-spacing:0.2px">Strona</div>

<div class="a" style="left:321px;top:124px;width:14px;height:413px;background:linear-gradient(90deg,rgba(0,0,0,.06),rgba(0,0,0,0))"></div>
<div class="a" style="left:321px;top:562px;width:10px;height:112px;background:linear-gradient(90deg,rgba(0,0,0,.07),rgba(0,0,0,0))"></div>
<!-- dropdown -->
<div class="a" style="left:904px;top:562px;width:120px;height:112px;background:#fff;box-shadow:-2px 0 4px rgba(0,0,0,.08)"></div>

<div class="a" style="left:909px;top:567px;width:115px;height:24px;border-radius:4px 0 0 4px;background:#f5d84a"></div>
<svg style="left:918px;top:572px" width="12" height="14" viewBox="0 0 12 14"><path d="M1 1 H7.5 L11 4.5 V13 H1Z" stroke="#2a2a2a" stroke-width="1.4" fill="none" stroke-linejoin="round"/><line x1="6" y1="6" x2="6" y2="11" stroke="#2a2a2a" stroke-width="1.4"/><line x1="3.5" y1="8.5" x2="8.5" y2="8.5" stroke="#2a2a2a" stroke-width="1.4"/></svg>
<div class="t" style="left:940px;top:573px;font-size:11.5px;color:#333">Dodaj strony</div>
<div class="a" style="left:909px;top:597px;width:115px;height:24px;border-radius:4px 0 0 4px;background:#fcefb6"></div>
<svg style="left:918px;top:601px" width="12" height="15" viewBox="0 0 12 15"><rect x="3" y="1" width="8" height="10" rx="1.5" stroke="#cfc9b0" stroke-width="1.3" fill="none"/><rect x="1" y="3.5" width="8" height="10.5" rx="1.5" stroke="#cfc9b0" stroke-width="1.3" fill="#fcefb6"/></svg>
<div class="t" style="left:939px;top:603px;font-size:11.5px;color:#cbc6b0">Duplikuj</div>
<svg style="left:919px;top:631px" width="11" height="13" viewBox="0 0 11 13"><line x1="0.5" y1="1.5" x2="10.5" y2="1.5" stroke="#aaa" stroke-width="1.2"/><line x1="3.5" y1="0.3" x2="7.5" y2="0.3" stroke="#aaa" stroke-width="1"/><path d="M1.8 3.5 V12.3 H9.2 V3.5" stroke="#aaa" stroke-width="1.2" fill="none"/></svg>
<div class="t" style="left:938px;top:632px;font-size:11.5px;color:#aaa">Usuń</div>
<svg style="left:1006px;top:692px" width="15" height="16" viewBox="0 0 15 16"><path d="M12.8 3.2 A10.5 10.5 0 0 1 2.3 13.6" stroke="#000" stroke-width="3.6" fill="none" stroke-linecap="round"/></svg>

<!-- spread pages -->
<div class="a" style="left:423px;top:158px;width:259px;height:343px;background:#fff;box-shadow:0 0 6px rgba(0,0,0,.15)"></div>
<div class="a" style="left:682px;top:158px;width:258px;height:343px;background:#c9606e;box-shadow:0 0 6px rgba(0,0,0,.15)"></div>


<div class="a" style="left:661px;top:158px;width:1px;height:343px;background:#d8d8d8"></div>
<div class="a" style="left:669px;top:158px;width:1.5px;height:343px;background:#d0d0d0"></div>
<div class="a" style="left:692px;top:158px;width:1.5px;height:343px;background:#b8525f"></div>
<div class="a" style="left:700px;top:158px;width:1.5px;height:343px;background:#b8525f"></div>
<svg style="left:715px;top:165px" width="210" height="52" viewBox="715 165 210 52"><path d="M719.3 173.5 Q719.3 170.5 722 170.5 L728.5 170.5 L733 184 L737 170.5 L743.5 170.5 Q746.1 170.5 746.1 173.5 L746.1 210 Q746.1 212.8 743.5 212.8 L738 212.8 Q735.5 212.8 735.5 210 L735.5 199 L733 195.5 L730 199 L730 210 Q730 212.8 727.5 212.8 L722 212.8 Q719.3 212.8 719.3 210 Z" fill="#f1d39e"/><rect x="748.3" y="170.5" width="26.9" height="42.3" rx="9" fill="#f1d39e"/><rect x="757.4" y="180" width="8.8" height="24" rx="4.4" fill="#c9606e"/><path d="M778.4 173.5 Q778.4 170.5 781 170.5 L795 170.5 Q806.2 170.5 806.2 181.5 L806.2 185 Q806.2 191.5 801.5 194 L806.4 209.5 Q807 212.8 804 212.8 L798 212.8 Q796 212.8 795.5 211 L791 197 L789 197 L789 210 Q789 212.8 786.5 212.8 L781 212.8 Q778.4 212.8 778.4 210 Z" fill="#f1d39e"/><rect x="789" y="179" width="7.5" height="9" rx="3" fill="#c9606e"/><rect x="807.3" y="170.5" width="26.4" height="42.3" rx="9" fill="#f1d39e"/><rect x="816.1" y="180" width="8.8" height="24" rx="4.4" fill="#c9606e"/><rect x="835.7" y="170.5" width="27.3" height="42.3" rx="9" fill="#f1d39e"/><rect x="845.1" y="180" width="8.6" height="24" rx="4.3" fill="#c9606e"/><rect x="850.4" y="189" width="14.1" height="8" fill="#c9606e"/><rect x="865.4" y="170.5" width="26.9" height="42.3" rx="9" fill="#f1d39e"/><rect x="874.5" y="180" width="8.6" height="24" rx="4.3" fill="#c9606e"/><rect x="879.8" y="189" width="14.0" height="8" fill="#c9606e"/><rect x="894.1" y="170.5" width="25.6" height="42.3" rx="9" fill="#f1d39e"/><rect x="902.5" y="180" width="8.8" height="24" rx="4.4" fill="#c9606e"/></svg>
<!-- camel placeholder -->
<svg style="left:720px;top:255px" width="200" height="170" viewBox="720 255 200 170">
<defs>
<linearGradient id="cb" x1="0" y1="0" x2="0" y2="1"><stop offset="0" stop-color="#f8dcae"/><stop offset="0.55" stop-color="#f2c68a"/><stop offset="1" stop-color="#e8a85c"/></linearGradient>
<radialGradient id="bl" cx="0.5" cy="0.45" r="0.6"><stop offset="0" stop-color="#8ac8c0"/><stop offset="0.7" stop-color="#5aa6a2"/><stop offset="1" stop-color="#2f7a7a"/></radialGradient>
<filter id="bb" x="-20%" y="-20%" width="140%" height="140%"><feGaussianBlur stdDeviation="2.5"/></filter><clipPath id="cc"><path id="sil" d="M732.5 280.5 Q734 275 738 273.5 Q745 270 752 268.5 L754 266 L757 268.5 L764 268.5 L766 267 L768 270.5 Q769 280 768.5 290 Q770 302 775 308 Q784 313 796 310 Q820 292 840 290 Q875 292 893 308 Q898 322 897 345 Q895 358 897 372 Q901 390 904 405 L907 414 Q907 418 900 418 L889 417 Q890 410 891 400 Q888 388 884 378 Q878 395 875 408 L874 417 L859 417 Q862 411 868 402 Q872 390 873 378 Q872 362 868 352 Q855 356 841 356 Q828 352 819 344 Q812 360 811 378 Q813 395 816 405 L818 415 L802 416 Q803 408 802 395 L801 390 Q798 402 797 410 L796 416 L780 416 Q783 411 790 405 Q798 390 799 375 Q798 360 799 350 Q784 345 773 338 Q762 328 757 312 Q754 298 752 291 Q745 288 738 287 Q733 285 732.5 280.5Z"/></clipPath>
</defs><g id="camelg">
<path d="M894 307 Q903 309 905 322 Q906 335 903 340 Q897 336 894 322Z" fill="#e09c50"/>
<use href="#sil" fill="url(#cb)"/>
<g clip-path="url(#cc)"><g filter="url(#bb)">
<use href="#sil" fill="none" stroke="#e39a52" stroke-width="4" opacity="0.55"/>
<path d="M757 300 Q765 330 790 342 Q815 350 830 330 Q820 310 800 310 Q780 312 770 300Z" fill="#fbe7c4" opacity="0.7"/>
<path d="M822 342 Q840 358 868 348 Q870 330 860 325 Q840 330 822 342Z" fill="#e6a35a" opacity="0.7"/>
<path d="M877 300 Q895 315 893 350 Q880 362 874 352 Q868 320 877 300Z" fill="#fbe3b8" opacity="0.6"/>
</g></g>
<ellipse cx="755.5" cy="277" rx="2.3" ry="1.7" fill="#2a1a14"/>
<path d="M736 282 Q739 284 742 283" stroke="#b7755a" stroke-width="0.7" fill="none"/>
<path d="M797 289 Q840 308 880.5 288 L883 298 Q840 322 795.5 304Z" fill="#96d6cf"/>
<path d="M799 290 C808 283 816 272 828 270.5 C838 269 848 271 853 274 C862 279 871 284 878 289 Q840 310 799 290Z" fill="url(#bl)"/>
<path d="M796.5 297 Q840 317 881.5 293.5" stroke="#6fa9a2" stroke-width="3.2" fill="none"/>
<path d="M796.5 297 Q840 317 881.5 293.5" stroke="#e08a6e" stroke-width="1.3" stroke-dasharray="1.5 3" fill="none"/>
<g stroke-width="2.2" fill="none" stroke-linejoin="round" stroke-linecap="round"><path d="M794 306 L797 314 L800 306" stroke="#76a873"/><path d="M803 310 L806 319.5 L809 310" stroke="#e07d62"/><path d="M813 313.5 L816 325.5 L819 313.5" stroke="#3e8a84"/><path d="M823 315.5 L826 327.5 L829 315.5" stroke="#7aae74"/><path d="M833 316.5 L836 329.5 L839 316.5" stroke="#e0775a"/><path d="M843 316 L846 327 L849 316" stroke="#e0775a"/><path d="M853 314 L856 324 L859 314" stroke="#76a873"/><path d="M862 310.5 L865 319.0 L868 310.5" stroke="#84b47e"/><path d="M871 305.5 L874 312.5 L877 305.5" stroke="#9cc48e"/></g>
</g></svg>


<!-- yellow strip -->
<div class="a" style="left:617px;top:460px;width:65px;height:41px;background:#f6df64"></div>
<div class="a" style="left:682px;top:460px;width:63px;height:41px;background:#eebe48"></div>
<div class="a" style="left:745px;top:460px;width:195px;height:41px;background:#edbd45;border-left:1px solid #f3d27a"></div>
<div class="t" style="left:617px;width:128px;text-align:center;top:468px;font-size:11.5px;font-weight:bold;color:#333;line-height:12px">DODAJ JAKO<br>TŁO</div>
<div class="t" style="left:745px;width:195px;text-align:center;top:476px;font-size:11.5px;font-weight:bold;color:#333">DODAJ JAKO TŁO</div>
<div class="a" style="left:404px;top:439px;width:213px;height:62px;background:#f6d94a;box-shadow:0 1px 4px rgba(0,0,0,.1)"></div>
<div class="t" style="left:425px;width:190px;text-align:center;top:453px;font-size:11.5px;font-weight:bold;color:#333;line-height:12px">PRZECIĄGNIJ TUTAJ, ABY<br>DODAĆ TŁO NA LEWĄ<br>STRONĘ</div>
<div class="a" style="left:404px;top:436px;width:51px;height:72px;background:linear-gradient(90deg,#d5727a,#cc6270 60%,#c9606e);opacity:0.95"></div>
<svg style="left:404px;top:436px" width="51" height="72" viewBox="0 0 51 72"><path d="M32.8 17.5 L34.4 18.7 L40.6 19.4 L41.8 22.5 L42.5 26.5 L39.4 28.1 L35.6 29.4 L33.8 31.9 L27.5 34.3 L25.9 36.2 L25.9 42.5 L21.9 43.1 L18.5 43.7 L17.8 47.5 L16.6 49.9 L15.9 53.7 L7.5 54.0 L9.2 51.2 L11.4 47.5 L13.6 43.6 L15.9 40.2 L18.5 37.6 L20.7 35.1 L22.5 32.5 L22.9 29.4 L25.5 25.1 L28.8 22.5 L31.0 19.9Z" fill="#f1d09b"/></svg>
<svg style="left:418px;top:462px" width="23" height="22" viewBox="0 0 23 22"><g stroke="#2a2a2a" stroke-width="2.4" fill="none"><line x1="11.5" y1="3" x2="11.5" y2="19"/><line x1="3" y1="11" x2="20" y2="11"/></g><g fill="#2a2a2a"><path d="M11.5 0 L15.5 5 H7.5Z"/><path d="M11.5 22 L15.5 17 H7.5Z"/><path d="M0 11 L5 7 V15Z"/><path d="M23 11 L18 7 V15Z"/></g></svg>

<div class="t" style="left:524px;top:506px;font-size:11.5px;color:#222;letter-spacing:0.5px">Tył okładki</div>
<div class="t" style="left:774px;top:506px;font-size:11.5px;color:#222;letter-spacing:0.4px">Przód okładki</div>

</body></html>
